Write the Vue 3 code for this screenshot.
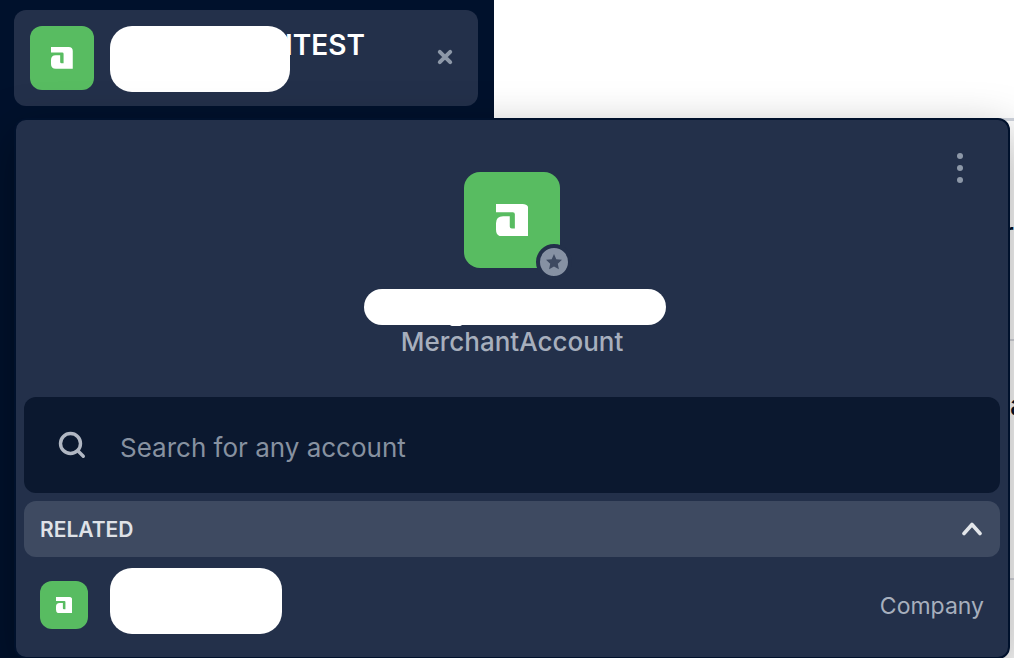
<script setup>
import { ref } from 'vue'

const query = ref('')
const open = ref(true)
const logo =
  'M0 0H26Q32 0 32 6V32H7Q0 32 0 25V19Q0 12 7 12H13.5V22Q13.5 24 15.5 24H18.5V10Q18.5 8 16.5 8H0Z'
</script>

<template>
  <div class="page">
    <aside class="sidebar">
      <header class="current">
        <span class="tile tile-md">
          <svg viewBox="0 0 32 32" aria-hidden="true"><path :d="logo" /></svg>
        </span>
        <span class="mask mask-current"></span>
        <strong class="current-name">ITEST</strong>
        <button class="close" type="button" aria-label="Close">
          <svg viewBox="0 0 18 18" aria-hidden="true"><path d="M3.8 3.8L14.2 14.2M14.2 3.8L3.8 14.2" /></svg>
        </button>
      </header>
    </aside>

    <main class="content">
      <div class="band band-top"></div>
      <div class="band band-first"><span class="clip clip-r">r</span></div>
      <div class="band band-second"><span class="clip clip-a">a</span></div>
    </main>

    <section class="panel">
      <button class="more" type="button" aria-label="More options">
        <svg viewBox="0 0 8 32" aria-hidden="true">
          <circle cx="4" cy="4" r="3" />
          <circle cx="4" cy="16" r="3" />
          <circle cx="4" cy="28" r="3" />
        </svg>
      </button>

      <div class="account">
        <span class="tile tile-lg">
          <svg viewBox="0 0 32 32" aria-hidden="true"><path :d="logo" /></svg>
          <span class="badge">
            <svg viewBox="0 0 16 16" aria-hidden="true">
              <path d="M8 0L10.3 5.2L16 5.8L11.8 9.7L12.9 15.3L8 12.5L3.1 15.3L4.2 9.7L0 5.8L5.7 5.2Z" />
            </svg>
          </span>
        </span>
        <span class="mask mask-account"></span>
        <p class="kind">MerchantAccount</p>
      </div>

      <label class="search">
        <svg viewBox="0 0 28 28" aria-hidden="true">
          <circle cx="12.5" cy="12.5" r="10" />
          <path d="M19.8 19.8L25.3 25.3" />
        </svg>
        <input v-model="query" type="text" placeholder="Search for any account" aria-label="Search for any account" />
      </label>

      <button class="related" type="button" :aria-expanded="open" @click="open = !open">
        <span>RELATED</span>
        <svg viewBox="0 0 20 14" aria-hidden="true"><path d="M2 11.5L10 2.5L18 11.5" /></svg>
      </button>

      <a v-if="open" class="row" href="#">
        <span class="tile tile-sm">
          <svg viewBox="0 0 32 32" aria-hidden="true"><path :d="logo" /></svg>
        </span>
        <span class="mask mask-row"></span>
        <span class="row-kind">Company</span>
      </a>
    </section>
  </div>
</template>

<style>
body {
  margin: 0;
  background: #fff;
}
</style>

<style scoped>
* {
  box-sizing: border-box;
}

.page {
  position: relative;
  display: flex;
  min-height: 100vh;
  overflow: hidden;
  font-family: Inter, "Liberation Sans", sans-serif;
}

button {
  border: 0;
  padding: 0;
  background: none;
  font-family: inherit;
  cursor: pointer;
}

svg {
  display: block;
}

.sidebar {
  flex: 0 0 494px;
  padding: 10px 16px 0 14px;
  background: #00112c;
}

.current {
  display: flex;
  align-items: flex-start;
  padding: 16px 24px 14px 16px;
  border-radius: 12px;
  background: #23304a;
}

.tile {
  position: relative;
  display: grid;
  flex: none;
  place-items: center;
  background: #58bc61;
}

.tile > svg {
  width: 34%;
  fill: #fff;
}

.tile-sm {
  width: 48px;
  height: 48px;
  border-radius: 12px;
}

.tile-md {
  width: 64px;
  height: 64px;
  border-radius: 12px;
}

.tile-lg {
  width: 96px;
  height: 96px;
  border-radius: 16px;
}

.mask {
  flex: none;
  background: #fff;
}

.mask-current {
  width: 180px;
  height: 66px;
  margin-left: 16px;
  border-radius: 22px;
}

.current-name {
  margin-left: -5px;
  color: #fff;
  font-size: 28px;
  font-weight: 600;
  line-height: 38px;
}

.close {
  margin-left: auto;
  padding: 22px 0;
}

.close svg {
  width: 18px;
  height: 18px;
  fill: none;
  stroke: #8d98a8;
  stroke-width: 4;
  stroke-linecap: round;
}

.content {
  flex: 1;
  min-width: 0;
}

.band {
  display: flex;
  justify-content: flex-end;
  overflow: hidden;
  border-bottom: 2px solid #d8dae0;
}

.band-top {
  height: 121px;
  border-bottom: 3px solid #cfd4dd;
}

.band-first {
  height: 220px;
}

.band-second {
  height: 239px;
}

.clip {
  color: #00112c;
  font-size: 28px;
  font-weight: 500;
  line-height: 32px;
}

.clip-r {
  width: 11px;
  padding-top: 96px;
}

.clip-a {
  width: 4px;
  padding-top: 48px;
}

.panel {
  position: absolute;
  top: 118px;
  right: 4px;
  left: 14px;
  padding: 52px 8px 20px;
  border: 2px solid #00112c;
  border-radius: 12px;
  background: #23304a;
  box-shadow: 0 16px 48px rgba(0, 0, 0, 0.36);
}

.more {
  position: absolute;
  top: 32px;
  right: 44px;
}

.more svg {
  width: 8px;
  height: 32px;
  fill: #8d98a8;
}

.account {
  display: flex;
  flex-direction: column;
  align-items: center;
  padding-bottom: 38px;
}

.badge {
  position: absolute;
  right: -12px;
  bottom: -12px;
  display: grid;
  width: 36px;
  height: 36px;
  place-items: center;
  border: 4px solid #23304a;
  border-radius: 50%;
  background: #8691a3;
}

.badge svg {
  width: 16px;
  height: 16px;
  fill: #3e4a61;
}

.mask-account {
  position: relative;
  width: 302px;
  height: 36px;
  margin: 21px 0 0 6px;
  border-radius: 18px;
}

.mask-account::after {
  position: absolute;
  bottom: -1px;
  left: 86px;
  width: 12px;
  height: 4px;
  border-radius: 4px;
  background: #fff;
  content: "";
}

.kind {
  margin: 0;
  color: #a7afbd;
  font-size: 26px;
  font-weight: 500;
  line-height: 34px;
}

.search {
  display: flex;
  align-items: center;
  height: 96px;
  padding: 0 34px;
  border-radius: 12px;
  background: #0b182f;
}

.search svg {
  flex: none;
  width: 28px;
  height: 28px;
  fill: none;
  stroke: #b1b7c3;
  stroke-width: 3.4;
  stroke-linecap: round;
}

.search input {
  flex: 1;
  min-width: 0;
  margin-left: 34px;
  padding: 6px 0 0;
  border: 0;
  outline: 0;
  background: none;
  color: #fff;
  font-family: inherit;
  font-size: 26px;
  line-height: 32px;
}

.search input::placeholder {
  color: #8791a0;
  opacity: 1;
}

.related {
  display: flex;
  align-items: center;
  justify-content: space-between;
  width: 100%;
  height: 56px;
  margin-top: 8px;
  padding: 0 18px 0 16px;
  border-radius: 12px;
  background: #3e4a61;
  color: #dfe2e7;
  font-size: 21px;
  font-weight: 600;
}

.related svg {
  width: 20px;
  height: 14px;
  fill: none;
  stroke: #e3e6ea;
  stroke-width: 3.6;
  stroke-linecap: round;
  stroke-linejoin: round;
}

.row {
  display: flex;
  align-items: flex-end;
  margin-top: 11px;
  padding: 0 16px 3px;
  text-decoration: none;
}

.row .tile {
  margin-bottom: 5px;
}

.mask-row {
  width: 172px;
  height: 66px;
  margin-left: 22px;
  border-radius: 22px;
}

.row-kind {
  margin-left: auto;
  color: #a7afbd;
  font-size: 23px;
  line-height: 56px;
}
</style>
